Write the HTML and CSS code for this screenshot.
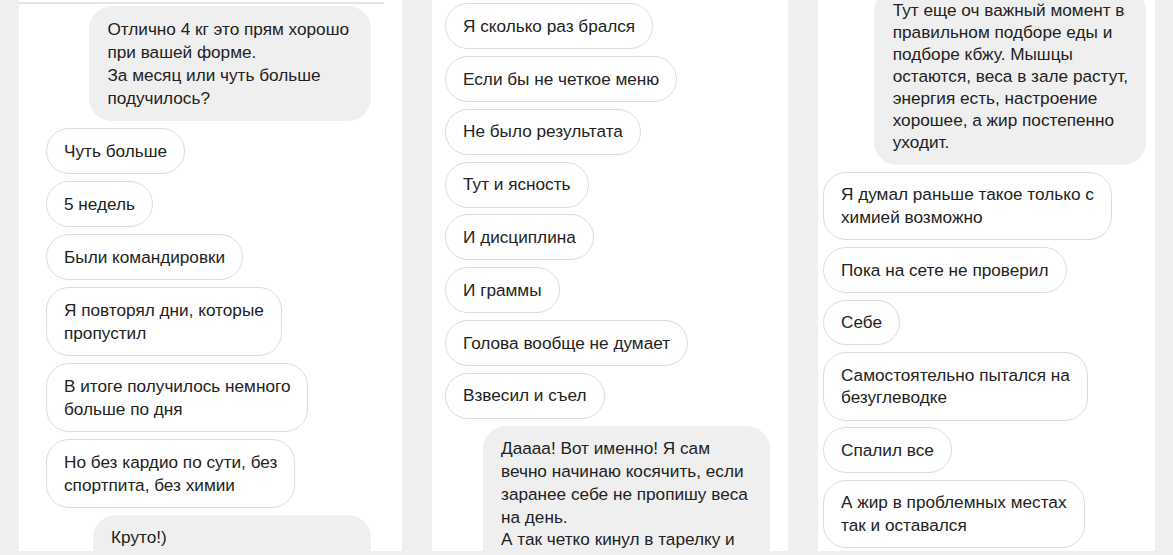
FILE: index.html
```html
<!DOCTYPE html>
<html lang="ru">
<head>
<meta charset="utf-8">
<title>Переписка</title>
<link rel="stylesheet" href="styles.css">
</head>
<body>
<main class="board">
  <section class="panel panel-one">
    <div class="panel-rule"></div>
    <div class="thread">
      <div class="msg out">Отлично 4 кг это прям хорошо<br>при вашей форме.<br>За месяц или чуть больше<br>подучилось?</div>
      <div class="msg in">Чуть больше</div>
      <div class="msg in">5 недель</div>
      <div class="msg in">Были командировки</div>
      <div class="msg in">Я повторял дни, которые<br>пропустил</div>
      <div class="msg in">В итоге получилось немного<br>больше по дня</div>
      <div class="msg in">Но без кардио по сути, без<br>спортпита, без химии</div>
      <div class="msg out cut wide-one">Круто!)</div>
    </div>
  </section>

  <section class="panel panel-two">
    <div class="thread">
      <div class="msg in">Я сколько раз брался</div>
      <div class="msg in">Если бы не четкое меню</div>
      <div class="msg in">Не было результата</div>
      <div class="msg in">Тут и ясность</div>
      <div class="msg in">И дисциплина</div>
      <div class="msg in">И граммы</div>
      <div class="msg in">Голова вообще не думает</div>
      <div class="msg in">Взвесил и съел</div>
      <div class="msg out cut wide-two">Даааа! Вот именно! Я сам<br>вечно начинаю косячить, если<br>заранее себе не пропишу веса<br>на день.<br>А так четко кинул в тарелку и</div>
    </div>
  </section>

  <section class="panel panel-three">
    <div class="thread">
      <div class="msg out tight">Тут еще оч важный момент в<br>правильном подборе еды и<br>подборе кбжу. Мышцы<br>остаются, веса в зале растут,<br>энергия есть, настроение<br>хорошее, а жир постепенно<br>уходит.</div>
      <div class="msg in">Я думал раньше такое только с<br>химией возможно</div>
      <div class="msg in">Пока на сете не проверил</div>
      <div class="msg in">Себе</div>
      <div class="msg in">Самостоятельно пытался на<br>безуглеводке</div>
      <div class="msg in">Спалил все</div>
      <div class="msg in">А жир в проблемных местах<br>так и оставался</div>
    </div>
  </section>
</main>
</body>
</html>
```

FILE: styles.css
```css
* {
  box-sizing: border-box;
}

html, body {
  margin: 0;
  padding: 0;
  background: #efefef;
}

body {
  font-family: "Liberation Sans", Arial, sans-serif;
  color: #222222;
  overflow: hidden;
}

.board {
  display: flex;
  gap: 30px;
  padding-left: 19px;
  height: 551px;
}

.panel {
  background: #ffffff;
  height: 551px;
  overflow: hidden;
  display: flex;
  flex-direction: column;
  --lh: 22.8px;
  font-size: 17.2px;
}

.panel-one {
  width: 383px;
  --lh: 23px;
}

.panel-two {
  width: 356px;
  --lh: 22.8px;
}

.panel-three {
  width: 337px;
  --lh: 22.6px;
}

.panel-rule {
  flex: none;
  margin-top: 2px;
  width: 365px;
  height: 2px;
  background: #e4e4e4;
}

.thread {
  display: flex;
  flex-direction: column;
  gap: 6.8px;
}

.panel-one .thread {
  padding-top: 2px;
}

.panel-two .thread {
  padding-top: 3.3px;
}

.panel-three .thread {
  margin-top: -12.2px;
}

.msg {
  line-height: var(--lh);
  padding: 10.6px 17px;
  border: 1px solid #dcdcdc;
  border-radius: 23px;
  white-space: nowrap;
  flex: none;
}

.msg.in {
  align-self: flex-start;
  background: #ffffff;
}

.msg.out {
  align-self: flex-end;
  background: #efefef;
  border-color: #efefef;
}

.msg.tight {
  line-height: 22px;
}

.panel-one .msg.in {
  margin-left: 27px;
}

.panel-one .msg.out {
  margin-right: 31px;
  padding-right: 21px;
}

.panel-two .msg.in {
  margin-left: 13px;
}

.panel-two .msg.out {
  margin-right: 18px;
}

.panel-three .msg.in {
  margin-left: 5px;
}

.panel-three .msg.out {
  margin-right: 9px;
  padding-left: 18px;
}

.msg.cut {
  padding-bottom: 40px;
}

.wide-one {
  width: 278px;
}

.wide-two {
  width: 287px;
}
```
